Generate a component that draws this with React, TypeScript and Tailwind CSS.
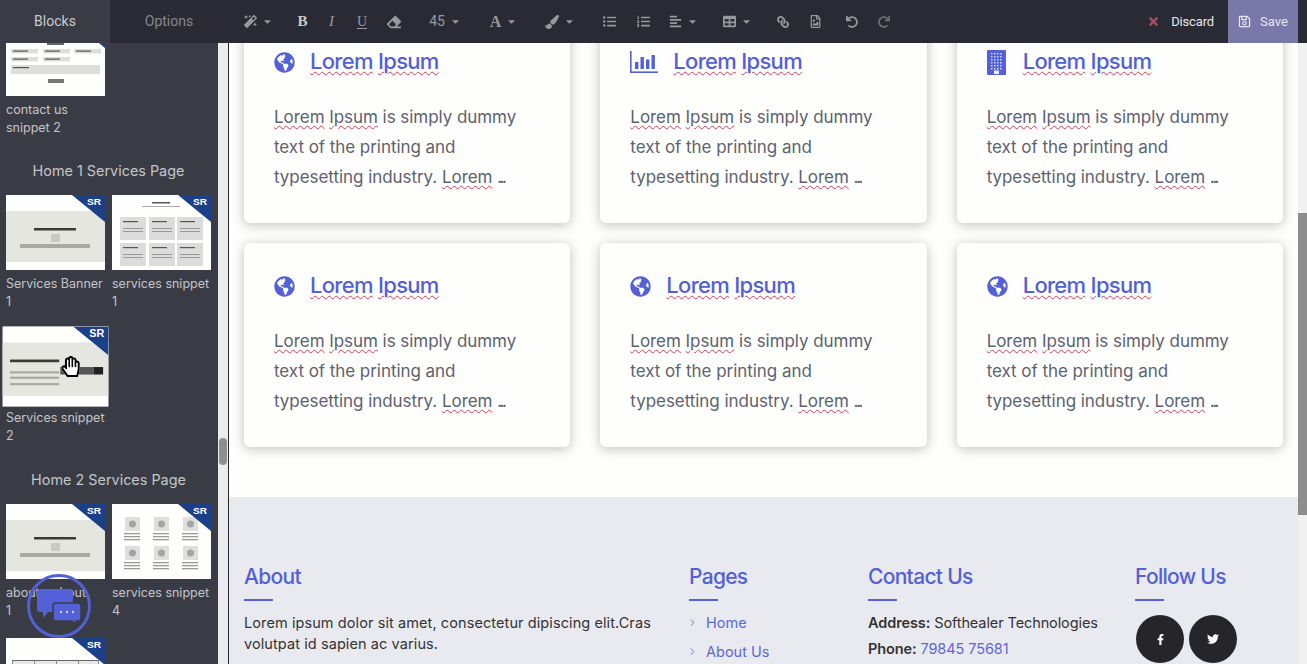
import {
  FaAlignLeft,
  FaCaretDown,
  FaEraser,
  FaFacebookF,
  FaGlobeAmericas,
  FaHandPaper,
  FaLink,
  FaListOl,
  FaListUl,
  FaMagic,
  FaPaintBrush,
  FaRedo,
  FaRegFileImage,
  FaRegHandPaper,
  FaRegSave,
  FaTable,
  FaTimes,
  FaTwitter,
  FaUndo,
} from 'react-icons/fa'
import { ChevronRight } from 'lucide-react'

const poppins = "font-['Inter','Noto_Sans',sans-serif]"
const serif = "font-['Liberation_Serif',serif]"

function Corner({ logo = true }: { logo?: boolean }) {
  return (
    <>
      <polygon points="66,0 99,0 99,27" fill="#1c3f8a" />
      {logo && (
        <text x="81" y="10" fontSize="9.5" fontWeight="900" fill="#fff" textLength="14" lengthAdjust="spacingAndGlyphs" fontFamily="Liberation Sans, sans-serif">
          SR
        </text>
      )}
    </>
  )
}

function BannerArt() {
  return (
    <>
      <rect y="16" width="99" height="51" fill="#e6e6e1" />
      <rect x="28" y="33" width="42" height="2.5" fill="#3a3a3a" />
      <rect x="45" y="39" width="9" height="8" fill="#c8c8c4" />
      <rect x="14" y="49" width="70" height="4" fill="#a8a8a4" />
    </>
  )
}

function CardsArt() {
  const cols = [8, 37, 65]
  return (
    <>
      <rect x="40" y="7" width="18" height="1.5" fill="#555" />
      <rect x="30" y="11" width="38" height="1" fill="#aaa" />
      {[22, 48].map((y) =>
        cols.map((x) => (
          <g key={`${x}-${y}`}>
            <rect x={x} y={y} width="26" height="23" fill="#dcdcdc" />
            <rect x={x + 3} y={y + 4} width="15" height="1.2" fill="#555" />
            <rect x={x + 3} y={y + 11} width="20" height="1" fill="#999" />
            <rect x={x + 3} y={y + 14} width="20" height="1" fill="#999" />
          </g>
        )),
      )}
    </>
  )
}

function SnippetArt() {
  return (
    <>
      <rect y="15" width="99" height="50" fill="#e6e6e1" />
      <rect x="7" y="31" width="46" height="2.5" fill="#3a3a3a" />
      <rect x="7" y="42" width="46" height="2" fill="#a8a8a4" />
      <rect x="7" y="47" width="46" height="2" fill="#a8a8a4" />
      <rect x="7" y="53" width="46" height="2" fill="#a8a8a4" />
      <rect x="54" y="38" width="31" height="7" fill="#555" />
      <rect x="85" y="38" width="9" height="7" fill="#222" />
    </>
  )
}

function PhotosArt() {
  const cols = [12, 41, 70]
  return (
    <>
      {[13, 42].map((y) =>
        cols.map((x) => (
          <g key={`${x}-${y}`}>
            <rect x={x + 1} y={y} width="15" height="14" fill="#dedede" />
            <circle cx={x + 8.5} cy={y + 7} r="3.5" fill="#a5a5a5" />
            <rect x={x} y={y + 16} width="16" height="1.3" fill="#999" />
            <rect x={x} y={y + 19} width="16" height="1.3" fill="#999" />
            <rect x={x} y={y + 22} width="16" height="1.3" fill="#999" />
          </g>
        )),
      )}
    </>
  )
}

function FormArt() {
  return (
    <>
      <rect x="41" y="20" width="17" height="4" fill="#666" />
      {[5, 37, 68].map((x) => (
        <g key={x}>
          <rect x={x} y="28" width="27" height="4.5" fill="#ddd" />
          <rect x={x + 2} y="29.5" width="15" height="1.2" fill="#555" />
        </g>
      ))}
      {[5, 37].map((x) => (
        <g key={x}>
          <rect x={x} y="36" width="27" height="4.5" fill="#ddd" />
          <rect x={x + 2} y="37.5" width="15" height="1.2" fill="#555" />
        </g>
      ))}
      <rect x="5" y="44" width="89" height="9" fill="#ddd" />
      <rect x="7" y="46" width="16" height="1.2" fill="#555" />
      <rect x="42" y="58" width="16" height="4" fill="#777" />
    </>
  )
}

function TableArt() {
  return (
    <>
      <rect x="6" y="22" width="87" height="53" fill="#e8e8e8" />
      <rect x="6" y="22" width="87" height="1" fill="#666" />
      {[6, 28, 50, 72, 92].map((x) => (
        <rect key={x} x={x} y="22" width="1" height="53" fill="#888" />
      ))}
    </>
  )
}

const arts = {
  form: <FormArt />,
  banner: <BannerArt />,
  cards: <CardsArt />,
  snippet: <SnippetArt />,
  photos: <PhotosArt />,
  table: <TableArt />,
}

function Snippet({ art, label, className = '' }: { art: keyof typeof arts; label: string; className?: string }) {
  return (
    <div className="h-[134px] w-[99px]">
      <svg viewBox="0 0 99 75" className={`block h-[75px] w-[99px] bg-[#fefefc] ${className}`}>
        {arts[art]}
        {/* the top of the first block is scrolled away, its logo is out of view */}
        <Corner logo={art !== 'form'} />
      </svg>
      <p className={`mt-[5px] whitespace-pre-line text-[12.5px] leading-[18px] text-[#c4c5c9] ${poppins}`}>{label}</p>
    </div>
  )
}

function SectionTitle({ children, className = 'mt-[6px]' }: { children: string; className?: string }) {
  return (
    <h3 className={`col-span-2 mb-[13px] h-[22px] text-center text-[14.4px] leading-[22px] text-[#c4c5c9] ${className} ${poppins}`}>
      {children}
    </h3>
  )
}

function Sidebar() {
  return (
    <aside className="relative flex w-[218px] shrink-0 flex-col overflow-hidden bg-[#3a3c45]">
      <div className="-mt-[22px] grid grid-cols-[99px_99px] gap-x-[7px] px-[6px]">
        <Snippet art="form" label={'contact us\nsnippet 2'} />
        <div />
        <SectionTitle className="mt-[5px]">Home 1 Services Page</SectionTitle>
        <Snippet art="banner" label={'Services Banner\n1'} />
        <Snippet art="cards" label={'services snippet\n1'} />
        <Snippet art="snippet" label={'Services snippet\n2'} className="relative scale-[1.07]" />
        <div />
        <SectionTitle>Home 2 Services Page</SectionTitle>
        <Snippet art="banner" label={'about - about\n1'} />
        <Snippet art="photos" label={'services snippet\n4'} />
        <Snippet art="table" label="" />
      </div>

      {/* hand cursor over the hovered block */}
      <div className="absolute left-[61px] top-[313px] h-[21px] w-[19px]">
        <FaHandPaper className="absolute inset-0 h-[21px] w-[19px] text-white" />
        <FaRegHandPaper className="absolute inset-0 h-[21px] w-[19px] text-black" />
      </div>
    </aside>
  )
}

type ToolItem = { width: string; icon?: React.ReactNode; text?: string; caret?: boolean }

const tools: ToolItem[] = [
  { width: 'w-[60px]', icon: <FaMagic className="size-[13px]" />, caret: true },
  { width: 'w-[29px]', icon: <span className={`text-[15px] font-bold text-[#c9c9cc] ${serif}`}>B</span> },
  { width: 'w-[29px]', icon: <span className={`text-[15px] italic ${serif}`}>I</span> },
  { width: 'w-[32px]', icon: <span className={`text-[14px] underline underline-offset-2 ${serif}`}>U</span> },
  { width: 'w-[32px]', icon: <FaEraser className="size-[14px]" /> },
  { width: 'w-[70px]', text: '45', caret: true },
  { width: 'w-[47px]', icon: <span className={`text-[16px] font-bold ${serif}`}>A</span>, caret: true },
  { width: 'w-[65px]', icon: <FaPaintBrush className="size-[14px]" />, caret: true },
  { width: 'w-[34px]', icon: <FaListUl className="size-[13px]" /> },
  { width: 'w-[34px]', icon: <FaListOl className="size-[13px]" /> },
  { width: 'w-[47px]', icon: <FaAlignLeft className="size-[13px]" />, caret: true },
  { width: 'w-[61px]', icon: <FaTable className="size-[13px]" />, caret: true },
  { width: 'w-[30px]', icon: <FaLink className="size-[12px] -scale-x-100" /> },
  { width: 'w-[34px]', icon: <FaRegFileImage className="size-[13px]" /> },
  { width: 'w-[40px]', icon: <FaUndo className="size-[12px]" /> },
  { width: 'w-[24px]', icon: <FaRedo className="size-[12px] text-[#6f6f75]" /> },
]

function Toolbar() {
  return (
    <header className="flex h-[43px] shrink-0 items-center bg-[#2a2a35] font-['Roboto',sans-serif] text-[#98989d]">
      <div className="flex h-full w-[110px] items-center justify-center bg-[#3a3c45] text-[14px] text-[#c9cacd]">Blocks</div>
      <div className="flex h-full w-[118px] items-center justify-center text-[14px] text-[#85868c]">Options</div>
      {tools.map((tool, i) => (
        <div key={i} className={`flex h-full items-center justify-center gap-[5px] ${tool.width}`}>
          {tool.icon}
          {tool.text && <span className="text-[14px]">{tool.text}</span>}
          {tool.caret && <FaCaretDown className="size-[11px]" />}
        </div>
      ))}
      <div className="ml-auto flex items-center gap-[11px] pr-[14px] text-[13px] tracking-[-0.15px] text-[#e6e6e8]">
        <FaTimes className="size-[13px] text-[#b0475f]" />
        Discard
      </div>
      <div className="mr-[9px] flex h-full w-[70px] items-center gap-[9px] bg-[#7a78a8] pl-[10px] text-[13px] text-[#e6e6ee]">
        <FaRegSave className="size-[13px]" />
        Save
      </div>
    </header>
  )
}

function Wavy({ children }: { children: string }) {
  return <span className="underline decoration-[#cf3a5c] decoration-wavy decoration-1 underline-offset-2">{children}</span>
}

function ChartIcon() {
  return (
    <svg viewBox="0 0 28 24" fill="#5360d8" className="h-[24px] w-[28px] shrink-0">
      <rect x="0" y="1" width="1.6" height="22" />
      <rect x="0" y="21.4" width="28" height="1.6" />
      <rect x="5" y="12" width="3.4" height="7" />
      <rect x="10.5" y="7" width="3.4" height="12" />
      <rect x="16" y="9.5" width="3.4" height="9.5" />
      <rect x="21.5" y="5" width="3.4" height="14" />
    </svg>
  )
}

function BuildingIcon() {
  const rows = [3, 6, 9, 12, 15, 18]
  const cols = [4, 7, 10, 13]
  return (
    <svg viewBox="0 0 19 25" className="h-[25px] w-[19px] shrink-0">
      <rect width="19" height="25" rx="1" fill="#5360d8" />
      {rows.map((y) => cols.map((x) => <rect key={`${x}-${y}`} x={x} y={y} width="1.5" height="1.5" fill="#d4d7f6" />))}
      <rect x="7" y="20.5" width="5" height="3.5" fill="#f2f3fd" />
    </svg>
  )
}

const globe = <FaGlobeAmericas className="size-[21px] shrink-0" />

const cards = [
  { icon: globe, gap: 'gap-[15px]' },
  { icon: <ChartIcon />, gap: 'gap-[15px]' },
  { icon: <BuildingIcon />, gap: 'gap-[17px]' },
  { icon: globe, gap: 'gap-[15px]' },
  { icon: globe, gap: 'gap-[15px]' },
  { icon: globe, gap: 'gap-[15px]' },
]

function ServiceCard({ icon, gap }: { icon: React.ReactNode; gap: string }) {
  return (
    <div className="rounded-[6px] bg-[#fefefc] px-[30px] pb-[31px] pt-[30px] shadow-[0_2px_12px_rgba(0,0,0,0.25)]">
      <div className={`flex h-[26px] items-center text-[#5360d8] ${gap}`}>
        {icon}
        <h4 className="pb-[2px] text-[22px] font-medium leading-[24px] tracking-[-0.7px]">
          <Wavy>Lorem</Wavy> <Wavy>Ipsum</Wavy>
        </h4>
      </div>
      <p className="mt-[27px] text-[17px] leading-[30px] tracking-[-0.05px] text-[#5d6270]">
        <Wavy>Lorem</Wavy> <Wavy>Ipsum</Wavy> is simply dummy
        <br />
        text of the printing and
        <br />
        typesetting industry. <Wavy>Lorem</Wavy> <span className="tracking-[-2.5px]">...</span>
      </p>
    </div>
  )
}

function FooterHeading({ children }: { children: string }) {
  return (
    <>
      <h5 className="h-[26px] text-[21px] font-medium leading-[26px] tracking-[-0.7px] text-[#5360d8]">{children}</h5>
      <div className="mb-[11px] mt-[9px] h-[2px] w-[29px] bg-[#5360d8]" />
    </>
  )
}

function Footer() {
  return (
    <footer className="grid h-[167px] grid-cols-[445px_179px_267px_1fr] bg-[#e9eaef] pl-[15px] pt-[67px] text-[14.5px] text-[#333]">
      <div>
        <FooterHeading>About</FooterHeading>
        <p className="leading-[21px] tracking-[0.09px]">
          Lorem ipsum dolor sit amet, consectetur dipiscing elit.Cras
          <br />
          volutpat id sapien ac varius.
        </p>
      </div>
      <div>
        <FooterHeading>Pages</FooterHeading>
        {['Home', 'About Us'].map((page) => (
          <div key={page} className="mb-[8px] flex h-[21px] items-center gap-[8px] text-[#5d68d8]">
            <ChevronRight className="size-[11px] -ml-[2px]" strokeWidth={2} />
            {page}
          </div>
        ))}
      </div>
      <div>
        <FooterHeading>Contact Us</FooterHeading>
        <p className="mb-[5px] leading-[21px] tracking-[-0.1px]">
          <b className="font-semibold">Address:</b> Softhealer Technologies
        </p>
        <p className="leading-[21px] tracking-[-0.1px]">
          <b className="font-semibold">Phone:</b> <span className="text-[#5d68d8]">79845 75681</span>
        </p>
      </div>
      <div>
        <FooterHeading>Follow Us</FooterHeading>
        <div className="mt-[14px] flex gap-[5px] pl-[1px] text-white">
          <span className="flex size-[48px] items-center justify-center rounded-full bg-[#25252a]">
            <FaFacebookF className="size-[11px]" />
          </span>
          <span className="flex size-[48px] items-center justify-center rounded-full bg-[#25252a]">
            <FaTwitter className="size-[12px]" />
          </span>
        </div>
      </div>
    </footer>
  )
}

function ChatBubble() {
  return (
    <div className="absolute left-[27px] top-[574px] flex size-[64px] items-center justify-center rounded-full border-[3px] border-[#5360d8]">
      <svg viewBox="0 0 44 36" className="h-[36px] w-[44px]">
        <path d="M3 1h30a3 3 0 0 1 3 3v17a3 3 0 0 1-3 3H11l-5 6v-6H3a3 3 0 0 1-3-3V4a3 3 0 0 1 3-3z" fill="#5360d8" />
        <path d="M19 15h22a3 3 0 0 1 3 3v12a3 3 0 0 1-3 3h-2v3l-4-3H19a3 3 0 0 1-3-3V18a3 3 0 0 1 3-3z" fill="#5360d8" stroke="#3a3c45" strokeWidth="1.5" />
        <circle cx="24" cy="24" r="1.2" fill="#c9cdf5" />
        <circle cx="30" cy="24" r="1.2" fill="#c9cdf5" />
        <circle cx="36" cy="24" r="1.2" fill="#c9cdf5" />
      </svg>
    </div>
  )
}

export default function App() {
  return (
    <div className={`relative flex h-[664px] w-[1307px] flex-col overflow-hidden bg-white ${poppins}`}>
      <Toolbar />
      <div className="flex min-h-0 flex-1">
        <Sidebar />
        <div className="flex w-[10px] shrink-0 flex-col bg-[#ececec]">
          <div className="mx-auto mt-[395px] h-[27px] w-[8px] rounded-full bg-[#8f8f8f]" />
        </div>
        <main className="min-w-0 flex-1 overflow-hidden border-l border-[#26262c] bg-[#fefefc]">
          <div className="-mt-[24px] grid grid-cols-3 gap-x-[30px] gap-y-[20px] px-[15px] pb-[50px]">
            {cards.map((card, i) => (
              <ServiceCard key={i} icon={card.icon} gap={card.gap} />
            ))}
          </div>
          <Footer />
        </main>
        <div className="flex w-[9px] shrink-0 flex-col bg-[#f1f1f1]">
          <div className="mt-[170px] h-[302px] w-full bg-[#8d8d8d]" />
        </div>
      </div>
      <ChatBubble />
    </div>
  )
}
